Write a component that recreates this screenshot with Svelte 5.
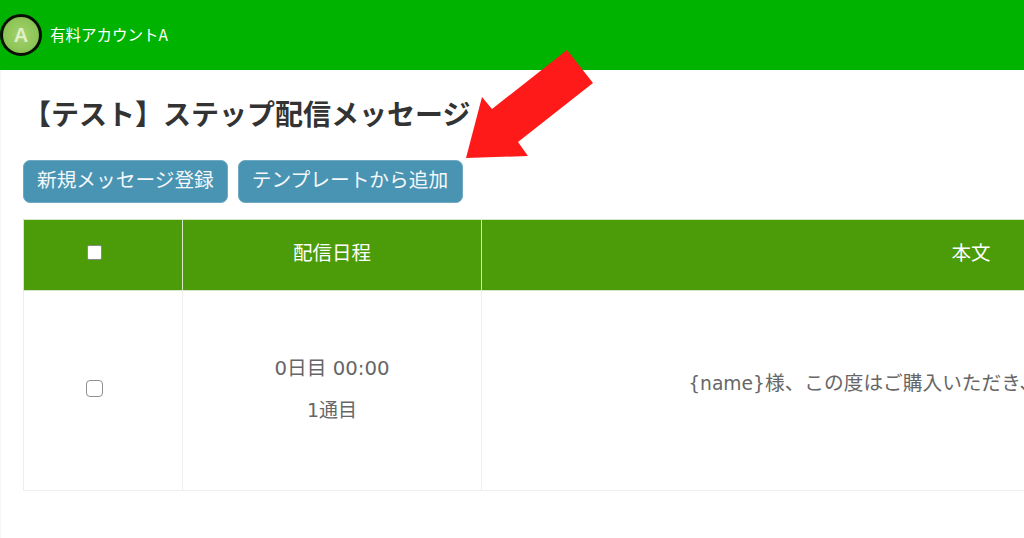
<script>
  const columns = ['配信日程', '本文'];
</script>

<div class="page">
  <header class="topbar">
    <div class="avatar"><span>A</span></div>
    <span class="account">有料アカウントA</span>
  </header>
  <main class="content">
    <h1>【テスト】ステップ配信メッセージ</h1>
    <div class="actions">
      <button class="btn">新規メッセージ登録</button>
      <button class="btn">テンプレートから追加</button>
    </div>
    <table>
      <thead>
        <tr>
          <th class="c1"><input type="checkbox" class="cb head-cb" /></th>
          <th class="c2">{columns[0]}</th>
          <th class="c3">{columns[1]}</th>
        </tr>
      </thead>
      <tbody>
        <tr>
          <td class="c1"><input type="checkbox" class="cb body-cb" /></td>
          <td class="c2">
            <p class="when">0日目 00:00</p>
            <p class="nth">1通目</p>
          </td>
          <td class="c3 msg"><span class="var">{'{name}'}</span>様、この度はご購入いただき、ありがとうございます。</td>
        </tr>
      </tbody>
    </table>
  </main>
  <svg class="arrow" viewBox="0 0 1024 538" width="1024" height="538" aria-hidden="true">
    <polygon points="567,50 593,83 518,142 528,156 466,158 482,97 492,109" fill="#ff1a1a" />
  </svg>
</div>

<style>
  :global(body) {
    margin: 0;
    background: #fff;
  }
  .page {
    position: relative;
    width: 1024px;
    height: 538px;
    overflow: hidden;
    font-family: "DejaVu Sans", "Noto Sans CJK JP", sans-serif;
    color: #666;
  }
  .topbar {
    height: 70px;
    background: #00b300;
    display: flex;
    align-items: center;
    gap: 8px;
    box-sizing: border-box;
  }
  .avatar {
    width: 42px;
    height: 42px;
    box-sizing: border-box;
    border-radius: 50%;
    border: 3px solid #0a0f06;
    background: radial-gradient(circle at 50% 50%, #a4d26e 0%, #8cc456 65%, #6d9c40 100%);
    display: flex;
    align-items: center;
    justify-content: center;
  }
  .avatar span {
    color: #dff0c8;
    font: 700 20px "Liberation Sans", sans-serif;
  }
  .account {
    color: #fff;
    font-size: 15.5px;
    line-height: 20px;
    margin-top: -2px;
    font-family: "Noto Sans CJK JP", sans-serif;
  }
  .content {
    height: 468px;
    box-sizing: border-box;
    padding: 21px 0 0 23px;
    border-left: 1px solid #f5f5f5;
  }
  h1 {
    margin: 0 0 25px -1px;
    font: 700 28px/44px "Noto Sans CJK JP", sans-serif;
    color: #333;
    white-space: nowrap;
  }
  .actions {
    display: flex;
    gap: 10px;
    margin-left: -1px;
  }
  .btn {
    height: 43px;
    padding: 0 13px 7px;
    border: 1px solid #6fa9c2;
    border-radius: 7px;
    background: #4a94b3;
    color: #f4f8fa;
    font: 400 19.7px "Noto Sans CJK JP", sans-serif;
    white-space: nowrap;
  }
  .btn + .btn {
    padding-right: 14px;
  }
  table {
    margin: 16px 0 0 -1px;
    border-collapse: collapse;
    table-layout: fixed;
    width: 1438px;
  }
  .c1 { width: 159px; }
  .c2 { width: 299px; }
  th {
    height: 71px;
    padding: 0 0 7px;
    box-sizing: border-box;
    background: #4c9c0a;
    color: #fff;
    font: 400 19.5px "Noto Sans CJK JP", sans-serif;
    border: 1px solid #d6e6c8;
  }
  td {
    height: 200px;
    padding: 0 0 4px;
    text-align: center;
    border: 1px solid #eee;
    box-sizing: border-box;
    font-family: "DejaVu Sans", "Noto Sans CJK JP", sans-serif;
    font-size: 19.7px;
    color: #666;
  }
  td.c3 { white-space: nowrap; overflow: hidden; padding-bottom: 18px; font-size: 19.7px; }
  .var { font-size: 18.7px; }
  .cb {
    appearance: none;
    display: block;
    box-sizing: border-box;
    background: #fff;
  }
  .head-cb {
    width: 15px;
    height: 15px;
    margin: 2px 0 0 63px;
    border: 1px solid #8a8a8a;
    border-radius: 2px;
  }
  .body-cb {
    width: 17px;
    height: 17px;
    margin: 0 0 0 62px;
    border: 1.5px solid #8f8f8f;
    border-radius: 4px;
  }
  .when, .nth { margin: 0; line-height: 26px; }
  .when { margin-top: 1px; }
  .nth { font-size: 19px; margin-top: 15px; }
  .arrow {
    position: absolute;
    inset: 0;
    pointer-events: none;
  }
</style>
